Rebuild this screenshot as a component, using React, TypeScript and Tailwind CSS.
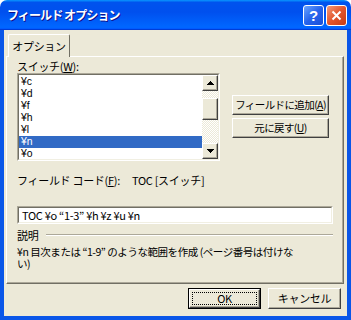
import React from "react";

const raised =
  "border border-t-white border-l-white border-r-[#404040] border-b-[#404040] shadow-[inset_-1px_-1px_0_#aca899]";
const sunkenOuter =
  "border border-t-[#aca899] border-l-[#aca899] border-r-white border-b-white";
const sunkenInner =
  "border border-t-[#716f64] border-l-[#716f64] border-r-[#f1efe2] border-b-[#f1efe2]";

const switches = ["c", "d", "f", "h", "l", "n", "o"];

const Arrow = ({ down }: { down?: boolean }) => (
  <svg width="7" height="4" viewBox="0 0 7 4" shapeRendering="crispEdges">
    <path
      d={
        down
          ? "M0 0h7v1H0zM1 1h5v1H1zM2 2h3v1H2zM3 3h1v1H3z"
          : "M3 0h1v1H3zM2 1h3v1H2zM1 2h5v1H1zM0 3h7v1H0z"
      }
      fill="#000"
    />
  </svg>
);

const PushButton = ({ children }: { children: React.ReactNode }) => (
  <div
    className={`h-[20px] w-[97px] flex items-center justify-center whitespace-nowrap text-[10.5px] tracking-[-0.6px] bg-[#ece9d8] ${raised}`}
  >
    {children}
  </div>
);

export default function App() {
  return (
    <div className="w-[351px] h-[320px] flex flex-col bg-white font-['Noto_Sans_CJK_JP',sans-serif] text-[11px] tracking-[-0.3px] text-black">
      {/* title bar */}
      <div className="h-[30px] shrink-0 rounded-t-[7px] bg-[linear-gradient(180deg,#0997ff,#0053ee_8%,#0050ee_40%,#0066ff_88%,#0066ff_93%,#005bff_95%,#003dd7_96%,#003dd7)] flex items-center pl-[7px] pr-[4px]">
        <span className="text-white font-bold text-[12px] leading-[14px] tracking-[-0.9px] [text-shadow:1px_1px_#0f1089]">
          フィールド オプション
        </span>
        <div className="ml-auto flex gap-[2px]">
          <div className="w-[21px] h-[21px] rounded-[3px] border border-white bg-[linear-gradient(135deg,#6aa5ff,#2663ec_50%,#1a4fd8)] flex items-center justify-center text-white font-bold text-[15px] leading-none tracking-normal font-['Liberation_Sans',sans-serif]">
            ?
          </div>
          <div className="w-[21px] h-[21px] rounded-[3px] border border-white bg-[linear-gradient(135deg,#f39a78,#e2552d_50%,#c63c16)] flex items-center justify-center">
            <svg width="11" height="11" viewBox="0 0 11 11">
              <path d="M1.5 1.5l8 8M9.5 1.5l-8 8" stroke="#fff" strokeWidth="2" />
            </svg>
          </div>
        </div>
      </div>

      {/* body */}
      <div className="flex-1 flex flex-col border-x-4 border-b-4 border-[#0a56e8] bg-[#ece9d8] pt-[4px] pl-[2px] pr-[3px]">
        <div className="relative z-10 -mb-px ml-[2px] w-[62px] h-[23px] rounded-t-[2px] border border-b-0 border-t-white border-l-white border-r-[#716f64] bg-[#ece9d8] flex items-center justify-center whitespace-nowrap">
          オプション
        </div>
        <div className="h-[228px] border border-t-white border-l-white border-r-[#716f64] border-b-[#716f64] shadow-[inset_-1px_-1px_0_#aca899] pl-[10px] pr-[10px] pt-[3px] flex flex-col">
          <div className="h-[12px] leading-[12px] whitespace-nowrap">
            スイッチ(<span className="underline">W</span>):
          </div>
          <div className="mt-[1px] flex items-start">
            <div className={`w-[203px] h-[88px] ${sunkenOuter}`}>
              <div className={`h-full flex ${sunkenInner}`}>
                <div className="flex-1 bg-white pt-[1px] overflow-hidden font-['Liberation_Sans',sans-serif] text-[10.4px] tracking-normal">
                  {switches.map((s) => (
                    <div
                      key={s}
                      className={`h-[12px] leading-[12px] pl-[2px] ${
                        s === "n" ? "bg-[#316ac5] text-white" : ""
                      }`}
                    >
                      ¥{s}
                    </div>
                  ))}
                </div>
                <div className="w-[16px] flex flex-col">
                  <div className={`h-[16px] flex items-center justify-center bg-[#ece9d8] ${raised}`}>
                    <Arrow />
                  </div>
                  <div className="flex-1 bg-[repeating-conic-gradient(#ffffff_0%_25%,#ece9d8_0%_50%)] bg-[length:2px_2px]">
                    <div className={`mt-[7px] h-[22px] bg-[#ece9d8] ${raised}`} />
                  </div>
                  <div className={`h-[16px] flex items-center justify-center bg-[#ece9d8] ${raised}`}>
                    <Arrow down />
                  </div>
                </div>
              </div>
            </div>
            <div className="ml-[12px] mt-[22px] flex flex-col gap-[3px]">
              <PushButton>
                フィールドに追加(<span className="underline">A</span>)
              </PushButton>
              <PushButton>
                元に戻す(<span className="underline">U</span>)
              </PushButton>
            </div>
          </div>

          <div className="mt-[13px] h-[12px] leading-[12px] flex whitespace-nowrap">
            <span className="shrink-0 mr-[12px]">
              フィールド コード(<span className="underline">F</span>):
            </span>
            <span>TOC [スイッチ]</span>
          </div>

          <div className={`mt-[20px] w-[316px] h-[18px] ${sunkenOuter}`}>
            <div className={`h-full bg-white pl-[3px] flex items-center whitespace-nowrap ${sunkenInner}`}>
              TOC ¥o “1-3” ¥h ¥z ¥u ¥n
            </div>
          </div>

          <div className="mt-[5px] h-[12px] leading-[12px] flex items-center w-[316px]">
            <span>説明</span>
            <div className="flex-1 ml-[8px] border-t border-t-[#aca899] border-b border-b-white" />
          </div>

          <div className="mt-[5px] leading-[12px] whitespace-nowrap text-[10.5px] tracking-[-0.45px]">
            <div>¥n 目次または “1-9” のような範囲を作成 (ページ番号は付けな</div>
            <div>い)</div>
          </div>
        </div>

        <div className="mt-[4px] flex justify-end gap-[7px] pr-[3px]">
          <div className="w-[73px] h-[21px] border border-black flex">
            <div className={`flex-1 flex p-[2px] bg-[#ece9d8] ${raised}`}>
              <div className="flex-1 border border-dotted border-black flex items-center justify-center">
                OK
              </div>
            </div>
          </div>
          <div className={`w-[73px] h-[21px] flex items-center justify-center bg-[#ece9d8] ${raised}`}>
            キャンセル
          </div>
        </div>
      </div>
    </div>
  );
}
